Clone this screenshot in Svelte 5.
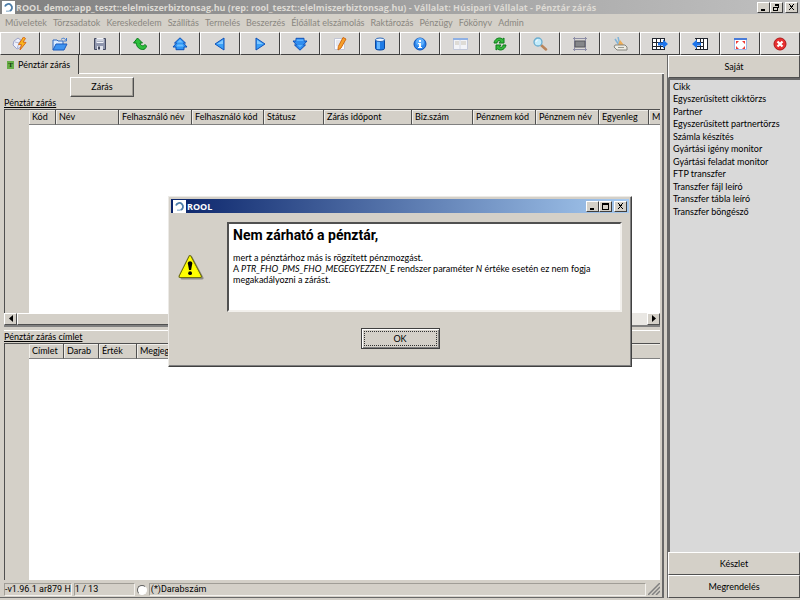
<script>
    let showModal = $state(true);
    let pending = $state(false);

    const menus = [
        'Műveletek', 'Törzsadatok', 'Kereskedelem', 'Szállítás', 'Termelés', 'Beszerzés',
        'Élőállat elszámolás', 'Raktározás', 'Pénzügy', 'Főkönyv', 'Admin',
    ];

    const tools = [
        'connect', 'open', 'save', 'undo', 'first', 'prev', 'next', 'last', 'edit', 'database',
        'info', 'form', 'refresh', 'search', 'filter', 'print', 'export', 'import', 'fullscreen', 'close',
    ];

    const closings = [
        { label: 'Kód', width: 27 },
        { label: 'Név', width: 63 },
        { label: 'Felhasználó név', width: 73 },
        { label: 'Felhasználó kód', width: 72 },
        { label: 'Státusz', width: 60 },
        { label: 'Zárás időpont', width: 88 },
        { label: 'Biz.szám', width: 61 },
        { label: 'Pénznem kód', width: 63 },
        { label: 'Pénznem név', width: 63 },
        { label: 'Egyenleg', width: 50 },
        { label: 'M' },
    ];

    const denominations = [
        { label: 'Címlet', width: 35 },
        { label: 'Darab', width: 35 },
        { label: 'Érték', width: 38 },
        { label: 'Megjegyzés', width: 100 },
        { label: '' },
    ];

    const shortcuts = [
        'Cikk', 'Egyszerűsített cikktörzs', 'Partner', 'Egyszerűsített partnertörzs', 'Számla készítés',
        'Gyártási igény monitor', 'Gyártási feladat monitor', 'FTP transzfer', 'Transzfer fájl leíró',
        'Transzfer tábla leíró', 'Transzfer böngésző',
    ];
</script>

{#snippet logo()}
    <svg class="logo" viewBox="0 0 13 13" aria-hidden="true">
        <rect width="13" height="13" fill="#fff" />
        <path d="M3 5.500a3.600 3.600 0 1 1 4.500 4.500" fill="none" stroke="#4d7da8" stroke-width="1.800" />
        <path d="M4 10.200h3.400" stroke="#9dbbd4" stroke-width="1.400" />
    </svg>
{/snippet}

{#snippet winIcon(name)}
    <svg viewBox="0 0 9 8" aria-hidden="true" shape-rendering="crispEdges">
        {#if name === 'min'}
            <path d="M1 6h5v2H1z" />
        {:else if name === 'max'}
            <path d="M0 0h9v8H0zM1 2v5h7V2z" fill-rule="evenodd" />
        {:else if name === 'restore'}
            <path d="M2 0h6v5H6V4h1V2H3v1H2zM0 3h6v5H0zM1 5v2h4V5z" fill-rule="evenodd" />
        {:else}
            <path d="M1 0h2v1h1v1h1V1h1V0h2v1H7v1H6v1H5v1h1v1h1v1h1v1H6V6H5V5H4v1H3v1H1V6h1V5h1V4h1V3H3V2H2V1H1z" />
        {/if}
    </svg>
{/snippet}

{#snippet toolIcon(name)}
    <svg viewBox="0 0 16 14" aria-hidden="true">
        {#if name === 'connect'}
            <path d="M2 4l4-3 4 3-1 6-4 2-4-4z" fill="#edf0fb" stroke="#9ba2c8" />
            <path d="M3 5l4 1 2-3M7 6l-2 6" fill="none" stroke="#b4b9d5" />
            <path d="M11.500 0L6.500 7.500l3 .2L8 13l6-7.500-3-.5 2.500-3.500z" fill="#f9b51c" stroke="#d66a1c" />
        {:else if name === 'open'}
            <path d="M1 13V3h4l1 1h5v3" fill="#dcecff" stroke="#2c67bd" />
            <path d="M9 2.500C11 .5 13 1 13.500 3M14.500 1v3h-3" fill="none" stroke="#3a78cf" />
            <path d="M1 13l3-6h11l-3 6z" fill="#3f94f0" stroke="#1b5bbd" />
        {:else if name === 'save'}
            <path d="M2.500 1.500h11v11h-11z" fill="#8f96ad" stroke="#444a60" />
            <path d="M4.500 1h7v5h-7z" fill="#f5f6fb" />
            <path d="M5 3h6M5 4.500h6" stroke="#a9afc0" />
            <path d="M5 9h6v4H5z" fill="#dfe2eb" />
            <path d="M6 9.500h2v3H6z" fill="#41475b" />
        {:else if name === 'undo'}
            <path d="M5.500 1L1.500 6h2.700c.3 4 3.300 6.500 6.500 6.500 1.800 0 3.300-1 3.800-3.500l-1.500-1.500c-1.500 2.300-4.500 1.500-5-1.500h2.500z" fill="#2cbf3c" stroke="#0a7a1c" />
        {:else if name === 'first'}
            <path d="M8 .8l5.500 5.200h-2l3.500 4h-3v2.700H4V10H1l3.500-4h-2z" fill="#2f97f5" stroke="#0d50b8" stroke-linejoin="round" />
            <path d="M8 2.500L5 5.500h6zM5.500 7.500h5l1 2h-7z" fill="#6fbfff" />
        {:else if name === 'prev'}
            <path d="M12 1v12L3 7z" fill="#3aa0f8" stroke="#0d50b8" stroke-linejoin="round" />
            <path d="M11 3v4H5z" fill="#82c9ff" />
        {:else if name === 'next'}
            <path d="M4 1v12l9-6z" fill="#3aa0f8" stroke="#0d50b8" stroke-linejoin="round" />
            <path d="M5 3v4h6z" fill="#82c9ff" />
        {:else if name === 'last'}
            <path d="M8 13.200L13.500 8h-2L15 4h-3V1.300H4V4H1l3.500 4h-2z" fill="#2f8df0" stroke="#0d50b8" stroke-linejoin="round" />
            <path d="M4.500 2.500h7V4h-7zM5.500 8h5L8 10.500z" fill="#5cb4ff" />
        {:else if name === 'edit'}
            <path d="M2.500 1.500h10v11h-10z" fill="#fafbff" stroke="#c2c6d5" />
            <path d="M4 4h5M4 6h4M4 8h3" stroke="#d0d3de" />
            <path d="M11 .5l3 1.500-5 9-3 2 .3-3.500z" fill="#f6a02a" stroke="#cf6a15" />
        {:else if name === 'database'}
            <path d="M3.500 3v8.500c0 2 9 2 9 0V3z" fill="#1e7be6" stroke="#0b489f" />
            <path d="M5 5v7h3V5z" fill="#66b6ff" />
            <ellipse cx="8" cy="2.800" rx="4.500" ry="1.800" fill="#eaf4ff" stroke="#2c68b8" />
        {:else if name === 'info'}
            <circle cx="8" cy="7" r="6" fill="#2d88ee" stroke="#0d4eb3" />
            <circle cx="8" cy="5" r="4" fill="#5eaefc" />
            <path d="M7 3h2v2H7zM6 6h3v4h1v1H6v-1h1V7H6z" fill="#fff" />
        {:else if name === 'form'}
            <path d="M1.500 1.500h14v11h-14z" fill="#f3f4f8" stroke="#c2c8d8" />
            <path d="M1 1h15v2H1z" fill="#8eb0e4" />
            <path d="M3 5h4M9 5h5M3 7h4M9 7h5" stroke="#c9c3b4" />
            <path d="M8 3v9" stroke="#d4d8e2" />
        {:else if name === 'refresh'}
            <path d="M2 6c.5-4 5-6.500 8.500-4L12 1v5H7l1.500-1.800C6.500 3 5 4 5 6z" fill="#35b93d" stroke="#0d7c1b" />
            <path d="M14 8c-.5 4-5 6.500-8.500 4L4 13V8h5L7.500 9.800C9.500 11 11 10 11 8z" fill="#35b93d" stroke="#0d7c1b" />
        {:else if name === 'search'}
            <path d="M9 8l5 4.500" stroke="#b9855c" stroke-width="2.500" stroke-linecap="round" />
            <circle cx="6" cy="5" r="4" fill="#c4ecfb" stroke="#6baed0" stroke-width="1.300" />
            <path d="M4 5c0-1.500 1-2 2-2" fill="none" stroke="#fff" />
        {:else if name === 'filter'}
            <path d="M1 1.500h14M1 12.500h14M2.500 0v14M13.500 0v14" stroke="#8d8ea6" />
            <path d="M3 4h10v6H3z" fill="#85878a" stroke="#56575c" />
        {:else if name === 'print'}
            <path d="M3 2l4 6M6 0l2 8" stroke="#7eb3d9" stroke-width="1.500" />
            <path d="M8 3l4 5H6z" fill="#edac55" />
            <path d="M3 8h10l2 2v3H5L2 10z" fill="#eeece4" stroke="#85857e" />
            <path d="M6 10.500h6" stroke="#9b9b90" />
        {:else if name === 'export'}
            <path d="M0 1h12v12H0z" fill="#fff" />
            <path d="M0 1.500h13M0 5.500h13M0 9.500h13M0 12.500h13M.5 1v12M4.500 1v12M8.500 1v12M12.500 1v12" stroke="#20252e" />
            <path d="M6 5.500h5v-3l5 4.500-5 4.500v-3H6z" fill="#1d75ec" />
        {:else if name === 'import'}
            <path d="M4 1h12v12H4z" fill="#fff" />
            <path d="M3 1.500h13M3 5.500h9M3 9.500h9M3 12.500h13M4.500 1v12M8.500 1v12M11.500 1v12M15.500 1v12" stroke="#20252e" />
            <path d="M0 7l5-4.500v3h4v3H5v3z" fill="#1d75ec" />
        {:else if name === 'fullscreen'}
            <path d="M2.500 1.500h12v11h-12z" fill="#fff" stroke="#9fb6e2" />
            <path d="M2 1h13v2H2z" fill="#477bd9" />
            <path d="M4 4h3L4 7zM13 4v3l-3-3zM4 12V9l3 3zM13 12h-3l3-3z" fill="#ed3b35" />
        {:else}
            <circle cx="8" cy="7" r="6" fill="#e73030" stroke="#ae1818" />
            <path d="M5.500 4.500l5 5M10.500 4.500l-5 5" stroke="#fff" stroke-width="2.200" />
        {/if}
    </svg>
{/snippet}

{#snippet grid(columns)}
    <table>
        <colgroup>
            {#each columns as column}
                <col style:width={column.width ? `${column.width}px` : 'auto'} />
            {/each}
        </colgroup>
        <thead>
            <tr>
                {#each columns as column}
                    <th scope="col">{column.label}</th>
                {/each}
            </tr>
        </thead>
        <tbody></tbody>
    </table>
{/snippet}

<div class="window">
    <header class="titlebar">
        {@render logo()}
        <h1>ROOL demo::app_teszt::elelmiszerbiztonsag.hu (rep: rool_teszt::elelmiszerbiztonsag.hu) - Vállalat: Húsipari Vállalat - Pénztár zárás</h1>
        <div class="controls">
            <button aria-label="Kis méret">{@render winIcon('min')}</button>
            <button aria-label="Előző méret">{@render winIcon('restore')}</button>
            <button class="last" aria-label="Bezárás">{@render winIcon('x')}</button>
        </div>
    </header>

    <nav class="menubar">
        {#each menus as menu}
            <button>{menu}</button>
        {/each}
    </nav>

    <div class="toolbar">
        {#each tools as tool}
            <button aria-label={tool}>{@render toolIcon(tool)}</button>
        {/each}
    </div>

    <div class="workspace">
        <main>
            <div class="tabs">
                <button class="tab"><span class="mark">T</span>Pénztár zárás</button>
            </div>

            <div class="page">
                <div class="actions">
                    <button class="raised" onclick={() => (showModal = true)}>Zárás</button>
                </div>

                <section class="closings">
                    <h2>Pénztár zárás</h2>
                    <div class="grid">
                        <div class="gutter"></div>
                        {@render grid(closings)}
                    </div>
                    <div class="scrollbar">
                        <button aria-label="Balra"><svg viewBox="0 0 4 7"><path d="M4 0v7L0 3.500z" /></svg></button>
                        <div class="thumb"></div>
                        <button aria-label="Jobbra"><svg viewBox="0 0 4 7"><path d="M0 0v7l4-3.500z" /></svg></button>
                    </div>
                </section>

                <section class="denominations">
                    <h2>Pénztár zárás címlet</h2>
                    <div class="grid">
                        <div class="gutter"></div>
                        {@render grid(denominations)}
                    </div>
                </section>

                <footer>
                    <span class="version">-v1.96.1 ar879 H</span>
                    <span class="position">1 / 13</span>
                    <label><input type="checkbox" bind:checked={pending} /><span>(*)Darabszám</span></label>
                    <svg class="grip" viewBox="0 0 12 12" aria-hidden="true">
                        <path d="M0 12L12 0M4 12l8-8M8 12l4-4" stroke="#808080" stroke-width="1.500" />
                    </svg>
                </footer>
            </div>
        </main>

        <aside>
            <button class="group">Saját</button>
            <ul>
                {#each shortcuts as shortcut}
                    <li><a href="#top">{shortcut}</a></li>
                {/each}
            </ul>
            <button class="group">Készlet</button>
            <button class="group">Megrendelés</button>
        </aside>
    </div>

    {#if showModal}
        <div class="overlay">
            <div class="dialog" role="dialog" aria-labelledby="dialog-title">
                <div class="dialog-title">
                    {@render logo()}
                    <h2 id="dialog-title">ROOL</h2>
                    <div class="controls">
                        <button aria-label="Kis méret">{@render winIcon('min')}</button>
                        <button aria-label="Teljes méret">{@render winIcon('max')}</button>
                        <button class="last" aria-label="Bezárás" onclick={() => (showModal = false)}>{@render winIcon('x')}</button>
                    </div>
                </div>
                <div class="dialog-body">
                    <svg class="warning" viewBox="0 0 26 26" aria-hidden="true">
                        <path d="M13 3.500L24 24H4z" fill="#8e8c86" stroke="#8e8c86" stroke-width="3" stroke-linejoin="round" />
                        <path d="M12 2.500L22.500 22.500H2z" fill="#ff0" stroke="#6f6f10" stroke-width="3" stroke-linejoin="round" />
                        <path d="M12 2.500L22.500 22.500H2z" fill="#ff0" stroke="#ff0" stroke-linejoin="round" />
                        <path d="M9.800 9.500c0-3 4.500-3 4.500 0L13.100 16h-2z" fill="#000" />
                        <circle cx="12.100" cy="19.200" r="1.900" fill="#000" />
                    </svg>
                    <div class="message">
                        <h3>Nem zárható a pénztár,</h3>
                        <p>mert a pénztárhoz más is rögzített pénzmozgást.</p>
                        <p>A <em>PTR_FHO_PMS_FHO_MEGEGYEZZEN_E</em> rendszer paraméter <em>N</em> értéke esetén ez nem fogja</p>
                        <p>megakadályozni a zárást.</p>
                    </div>
                </div>
                <button class="ok" onclick={() => (showModal = false)}><span>OK</span></button>
            </div>
        </div>
    {/if}
</div>

<style>
    :global(body) {
        background: #d4d0c8;
    }

    .window {
        position: relative;
        display: flex;
        flex-direction: column;
        height: 100vh;
        overflow: hidden;
        background: #d4d0c8;
        color: #000;
        font: 9px/12px Lato, "Liberation Sans", sans-serif;
        font-feature-settings: "liga" 0;
    }
    button {
        padding: 0;
        border: 0;
        border-radius: 0;
        background: #d4d0c8;
        color: inherit;
        font: inherit;
    }
    h1, h2, h3, p, ul {
        margin: 0;
        padding: 0;
        font: inherit;
        font-feature-settings: inherit;
    }
    svg {
        display: block;
    }

    .titlebar {
        display: flex;
        align-items: center;
        height: 14px;
        padding: 0 2px;
        background: linear-gradient(90deg, #808080, #c0c0c0);
        color: #dedbd5;
    }
    .logo {
        width: 13px;
        height: 13px;
        flex: none;
    }
    h1, #dialog-title {
        flex: 1;
        min-width: 0;
        padding-left: 1px;
        overflow: hidden;
        font: bold 9px/13px "Open Sans", Verdana, sans-serif;
        white-space: nowrap;
    }
    .controls {
        display: flex;
    }
    .controls button {
        display: grid;
        place-items: center;
        width: 13px;
        height: 11px;
        border: 1px solid;
        border-color: #fff #404040 #404040 #fff;
        color: #000;
    }
    .controls .last {
        margin-left: 2px;
    }
    .controls svg {
        width: 7px;
        height: 7px;
    }

    .menubar {
        display: flex;
        gap: 6px;
        height: 18px;
        padding: 0 5px;
    }
    .menubar button {
        color: #8a8781;
        white-space: nowrap;
    }

    .toolbar {
        display: grid;
        grid-template-columns: repeat(20, 1fr);
        height: 23px;
    }
    .toolbar button {
        display: grid;
        place-items: center;
        border: 1px solid;
        border-color: #fff #404040 #404040 #fff;
        background: #dad8d5;
    }
    .toolbar svg {
        width: 16px;
        height: 14px;
    }

    .workspace {
        display: grid;
        grid-template-columns: 1fr 133px;
        gap: 3px;
        flex: 1;
        min-height: 0;
        padding-bottom: 2px;
    }
    main, .page, aside, section {
        display: flex;
        flex-direction: column;
        min-width: 0;
        min-height: 0;
    }
    .tabs {
        display: flex;
        height: 18px;
        border-bottom: 1px solid #fff;
    }
    .tab {
        display: flex;
        align-items: center;
        gap: 4px;
        margin-bottom: -1px;
        padding: 0 8px 0 7px;
        border-right: 1px solid #404040;
    }
    .mark {
        width: 7px;
        background: #67ad48;
        color: #143c10;
        font: bold 7px/8px "Liberation Serif", serif;
    }
    .page {
        flex: 1;
        padding: 3px 2px 0 4px;
        border-right: 2px solid #686868;
        border-bottom: 1px solid #686868;
    }
    .actions {
        padding-left: 66px;
    }
    .raised {
        width: 64px;
        height: 20px;
        border: 1px solid;
        border-color: #fff #505050 #505050 #fff;
        box-shadow: inset -1px -1px #a09d96;
    }
    section h2 {
        height: 12px;
        line-height: 12px;
        text-decoration: underline;
    }
    .closings {
        flex: 228 1 0;
        border-bottom: 2px solid #808080;
    }
    .denominations {
        flex: 250 1 0;
        margin-top: 3px;
        border-top: 1px solid #fff;
    }
    .grid {
        display: flex;
        flex: 1;
        min-height: 0;
        border-top: 1px solid #505050;
        border-left: 1px solid #505050;
        background: #fff;
    }
    .gutter {
        width: 24px;
        background: #d4d0c8;
    }
    table {
        flex: 1;
        width: 0;
        height: 16px;
        border-spacing: 0;
        table-layout: fixed;
    }
    th {
        height: 15px;
        box-sizing: border-box;
        padding: 0 0 0 3px;
        overflow: hidden;
        border-right: 1px solid #505050;
        border-bottom: 1px solid #808080;
        background: #d4d0c8;
        box-shadow: inset 1px 1px #f0eee9;
        font-weight: normal;
        text-align: left;
        white-space: nowrap;
    }
    th:last-child {
        border-right: 0;
    }
    .scrollbar {
        display: flex;
        height: 12px;
        background: #e9e7e3;
    }
    .scrollbar button, .thumb {
        border: 1px solid;
        border-color: #fff #505050 #505050 #fff;
        background: #d4d0c8;
    }
    .scrollbar button {
        display: grid;
        place-items: center;
        width: 13px;
    }
    .scrollbar svg {
        width: 4px;
        height: 7px;
    }
    .thumb {
        flex: 0 1 510px;
        margin-right: auto;
    }

    footer {
        display: flex;
        height: 13px;
        margin: 3px 0 1px;
        gap: 2px;
        font: 9px/12px Roboto, Tahoma, sans-serif;
    }
    footer > span, label > span {
        box-sizing: border-box;
        border: 1px solid;
        border-color: #a09d96 #f4f2ee #f4f2ee #a09d96;
        line-height: 11px;
        white-space: nowrap;
    }
    .version {
        min-width: 67px;
    }
    .position {
        width: 61px;
    }
    label {
        display: flex;
        flex: 1;
        align-items: center;
        gap: 2px;
    }
    label > span {
        flex: 1;
        padding-left: 1px;
    }
    input {
        appearance: none;
        width: 10px;
        height: 10px;
        margin: 0;
        border: 1px solid;
        border-color: #606060 #fff #fff #606060;
        border-radius: 50%;
        background: #fff;
    }
    .grip {
        width: 12px;
        height: 12px;
    }

    aside {
        border-left: 1px solid #686868;
    }
    .group {
        height: 23px;
        border: 1px solid;
        border-color: #fff #505050 #505050 #fff;
    }
    aside ul {
        flex: 1;
        padding: 1px 3px;
        border-top: 2px solid #686868;
        border-left: 2px solid #686868;
        background: #d9d9d9;
        list-style: none;
    }
    aside li {
        height: 12px;
        white-space: nowrap;
    }
    aside li:nth-child(even) {
        margin-bottom: 1px;
    }
    aside a {
        color: inherit;
        text-decoration: none;
    }

    .overlay {
        position: absolute;
        inset: 0;
        display: flex;
        align-items: flex-start;
        justify-content: center;
        padding-top: 196px;
    }
    .dialog {
        display: flex;
        flex-direction: column;
        box-sizing: border-box;
        width: 464px;
        padding: 2px;
        border: 1px solid;
        border-color: #eceae6 #404040 #404040 #eceae6;
        background: #d4d0c8;
        box-shadow: inset -1px -1px #808080;
    }
    .dialog-title {
        display: flex;
        align-items: center;
        height: 14px;
        padding: 0 2px;
        background: linear-gradient(90deg, #0a246a, #a6caf0);
        color: #fff;
    }
    .dialog-body {
        display: flex;
        align-items: center;
        gap: 23px;
        padding: 9px 7px 16px;
    }
    .warning {
        width: 26px;
        height: 26px;
    }
    .message {
        flex: 1;
        height: 90px;
        box-sizing: border-box;
        padding: 3px 4px;
        border: 2px solid;
        border-color: #505050 #f2f0ec #f2f0ec #505050;
        background: #fff;
        line-height: 11px;
        white-space: nowrap;
    }
    .message h3 {
        margin-bottom: 9px;
        font: bold 14px/16px Roboto, "Liberation Sans", sans-serif;
    }
    .ok {
        align-self: center;
        width: 79px;
        height: 21px;
        margin-bottom: 15px;
        padding: 2px;
        border: 1px solid #404040;
        box-shadow: inset 1px 1px #fff, inset -1px -1px #808080;
    }
    .ok span {
        display: block;
        border: 1px dotted #303030;
        line-height: 13px;
    }
</style>
